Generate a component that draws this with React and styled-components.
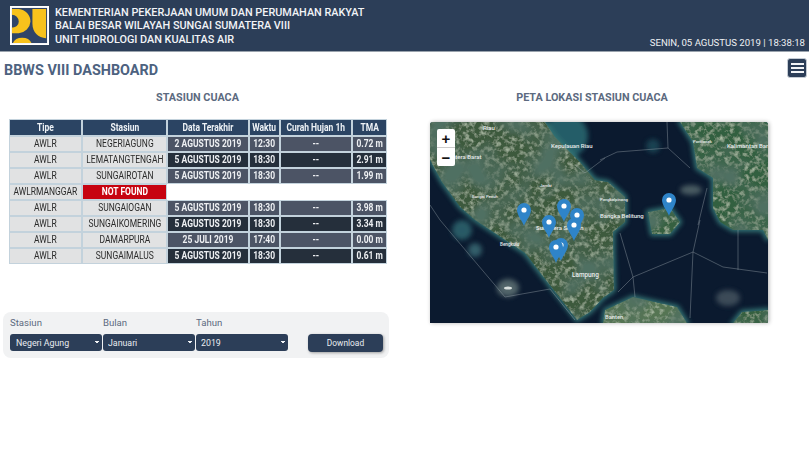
import React from 'react';
import styled, { createGlobalStyle } from 'styled-components';

const GlobalStyle = createGlobalStyle`
  html, body { margin: 0; padding: 0; background: #fff; }
  body { font-family: Roboto, "Liberation Sans", sans-serif; }
`;

const stations = [
  ['AWLR', 'NEGERIAGUNG', '2 AGUSTUS 2019', '12:30', '--', '0.72 m'],
  ['AWLR', 'LEMATANGTENGAH', '5 AGUSTUS 2019', '18:30', '--', '2.91 m'],
  ['AWLR', 'SUNGAIROTAN', '5 AGUSTUS 2019', '18:30', '--', '1.99 m'],
  ['AWLRMANGGAR', 'NOT FOUND'],
  ['AWLR', 'SUNGAIOGAN', '5 AGUSTUS 2019', '18:30', '--', '3.98 m'],
  ['AWLR', 'SUNGAIKOMERING', '5 AGUSTUS 2019', '18:30', '--', '3.34 m'],
  ['AWLR', 'DAMARPURA', '25 JULI 2019', '17:40', '--', '0.00 m'],
  ['AWLR', 'SUNGAIMALUS', '5 AGUSTUS 2019', '18:30', '--', '0.61 m'],
];

const pins = [
  [524, 226], [669, 216], [564, 222], [577, 231], [549, 238], [574, 241], [561, 261], [556, 263],
];

const Page = styled.div`
  width: 809px;
  height: 461px;
  overflow: hidden;
  background: #fff;
`;

const Header = styled.header`
  height: 52px;
  background: #2c3e58;
  border-bottom: 1px solid #9aa3ad;
  display: flex;
  padding: 6px 4px 0 10px;
  box-sizing: border-box;
  color: #fff;
`;

const Logo = styled.svg`
  width: 39px;
  height: 39px;
  flex: none;
`;

const HeaderText = styled.div`
  margin: 0 0 0 6px;
  font-size: 10.85px;
  font-weight: 500;
  line-height: 13.4px;
  color: #f2f4f7;
  flex: 1;
`;

const Clock = styled.div`
  align-self: flex-end;
  font-size: 9.6px;
  line-height: 12px;
  margin-bottom: 2px;
  color: #eef0f3;
`;

const TitleRow = styled.div`
  height: 38px;
  display: flex;
  align-items: center;
  justify-content: space-between;
  padding: 0 2px 0 4px;
`;

const Title = styled.h1`
  margin: -2px 0 0;
  font-size: 14.4px;
  font-weight: 700;
  color: #4d627f;
`;

const MenuButton = styled.button`
  width: 20px;
  height: 20px;
  margin-top: -6px;
  padding: 0;
  border: 1px solid #c5ccd4;
  border-radius: 3px;
  background: #2c3e58;
  display: flex;
  flex-direction: column;
  align-items: center;
  justify-content: center;
  gap: 2px;
`;

const MenuBar = styled.span`
  width: 13px;
  height: 2px;
  background: #f2f4f7;
`;

const Columns = styled.div`
  display: flex;
`;

const LeftColumn = styled.section`
  width: 395px;
  flex: none;
`;

const RightColumn = styled.section`
  width: 394px;
  flex: none;
`;

const SectionTitle = styled.h2`
  margin: 0;
  height: 29px;
  padding-top: 1px;
  box-sizing: border-box;
  line-height: 13px;
  font-size: 10.8px;
  font-weight: 700;
  text-align: center;
  color: #5c6a80;
`;

const Table = styled.table`
  margin: 0 0 0 9px;
  border-collapse: separate;
  border-spacing: 0;
  table-layout: fixed;
  width: 378px;
  font-size: 10.6px;
  line-height: 12px;
`;

const Squeeze = styled.span`
  display: block;
  width: 125%;
  margin-left: -12.5%;
  transform: scaleX(0.8);
  white-space: nowrap;
  text-align: center;
`;

const HeadCell = styled.th`
  height: 15px;
  padding: 0;
  border: 1px solid #c3d2dc;
  background: #2b4463;
  color: #eef2f6;
  font-weight: 700;
`;

const InfoCell = styled.td`
  height: 14px;
  padding: 0;
  border: 1px solid #c3d2dc;
  background: #e1e2e3;
  color: #2a2a2a;
`;

const MissingCell = styled(InfoCell)`
  background: #c70310;
  color: #fff;
  font-weight: 700;
`;

const ValueCell = styled.td`
  height: 14px;
  padding: 0;
  border: 1px solid #c3d2dc;
  background: ${(p) => (p.$dark ? '#252f3b' : '#4c5465')};
  color: #eef0f3;
  font-weight: 700;
`;

const BlankCell = styled.td`
  height: 14px;
  padding: 0;
  border: 1px solid transparent;
`;

const FilterPanel = styled.form`
  margin: 48px 0 0 3px;
  width: 386px;
  height: 46px;
  box-sizing: border-box;
  padding: 5px 6px 0 7px;
  background: #f1f2f3;
  border-radius: 8px;
  display: flex;
  align-items: flex-start;
`;

const Field = styled.label`
  width: 93px;
  display: flex;
  flex-direction: column;
  font-size: 9.6px;
  line-height: 12px;
  color: #5c6a80;
`;

const Select = styled.select`
  appearance: none;
  width: 92px;
  height: 17px;
  margin-top: 5px;
  padding: 0 0 0 ${(p) => p.$inset}px;
  border: 0;
  border-radius: 3px;
  background-color: #2c3e58;
  background-image: linear-gradient(45deg, transparent 50%, #f2f4f7 50%),
    linear-gradient(135deg, #f2f4f7 50%, transparent 50%);
  background-size: 2px 3px, 2px 3px;
  background-position: right 5px center, right 3px center;
  background-repeat: no-repeat;
  color: #e9ecf0;
  font-family: Roboto, sans-serif;
  font-size: 8.8px;
  outline: none;
`;

const DownloadButton = styled.button`
  width: 75px;
  height: 18px;
  margin: 17px 0 0 19px;
  padding: 0;
  border: 0;
  border-radius: 4px;
  background: #2c3e58;
  color: #e9ecf0;
  font-family: Roboto, sans-serif;
  font-size: 8.4px;
  box-shadow: 1px 1px 3px rgba(0, 0, 0, 0.35);
`;

const MapFrame = styled.div`
  position: relative;
  width: 338px;
  height: 201px;
  margin: 3px 0 0 35px;
  border-radius: 3px 3px 0 0;
  overflow: hidden;
  box-shadow: 1px 0 4px rgba(0, 0, 0, 0.3);
`;

const MapArt = styled.svg`
  display: block;
  width: 338px;
  height: 201px;
`;

const ZoomControl = styled.div`
  position: absolute;
  left: 7px;
  top: 7px;
  width: 18px;
  background: #fff;
  border-radius: 2px;
  display: flex;
  flex-direction: column;
`;

const ZoomButton = styled.span`
  height: 18px;
  display: flex;
  align-items: center;
  justify-content: center;
  font-family: "Liberation Sans", sans-serif;
  font-size: 15px;
  font-weight: 700;
  color: #111;
  & + & { border-top: 1px solid #ccc; }
`;

const sumatra = 'M0 0 L115 0 L125 15 L135 25 L150 40 L165 58 L178 60 L195 75 L195 100 L183 110 L184 168 L173 176 L160 190 L147 198 L108 148 L95 131 L45 98 L30 85 L12 60 L0 38 Z';
const kalimantan = 'M250 0 L263 20 L267 46 L283 56 L283 86 L290 100 L303 108 L333 108 L338 118 L338 0 Z';
const belitung = 'M218 90 L240 86 L250 100 L240 112 L222 112 Z';
const java = 'M173 201 L175 188 L203 175 L247 185 L257 201 Z';
const cornerIsle = 'M303 201 L312 190 L338 188 L338 201 Z';

const landPaths = [
  [sumatra, '#3e5a3e'],
  [kalimantan, '#336040'],
  [belitung, '#36603f'],
  [java, '#557552'],
  [cornerIsle, '#36603f'],
];

// shallow water round the islands: cx, cy, rx, ry, colour
const shallows = [
  [136, 14, 22, 22, '#2c6a72'],
  [32, 108, 10, 10, '#2e6670'],
  [45, 128, 7, 7, '#3a6a74'],
  [223, 24, 7, 7, '#1f4a58'],
  [78, 166, 11, 9, '#5e7275'],
  [298, 176, 12, 8, '#45525e'],
  [261, 68, 11, 5, '#55686c'],
];

const borderLines = [
  'M0 83 L10 98 L75 175 L120 167 L145 198',
  'M190 111 L203 155 L205 175',
  'M203 155 L263 130 L270 98',
  'M263 130 L260 196',
  'M263 130 L293 145 L337 151',
  'M308 108 L308 148',
  'M203 155 L188 170',
  'M237 0 L238 26 L260 46',
  'M238 26 L187 30 L170 38',
  'M277 66 L268 103',
  'M145 43 L155 51 L175 36',
];

const mapLabels = [
  [53, 8, 6, 'Riau'],
  [121, 26, 6, 'Kepulauan Riau'],
  [22, 37, 6, 'atera Barat'],
  [297, 26, 6, 'Kalimantan Bar'],
  [170, 96, 6, 'Bangka Belitung'],
  [106, 108, 6, 'Sumatera Selatan'],
  [142, 155, 6.4, 'Lampung'],
  [175, 197, 5.8, 'Banten'],
  [70, 124, 4.6, 'Bengkulu'],
  [42, 76, 4.2, 'Sungai Penuh'],
  [110, 65, 4.2, 'Jambi'],
  [263, 21, 4.2, 'Pontianak'],
  [170, 79, 4.2, 'Pangkalpinang'],
];

function StationMap() {
  return (
    <MapFrame>
      <MapArt viewBox="0 0 338 201">
        <defs>
          <filter id="land-grain" x="0" y="0" width="100%" height="100%">
            <feTurbulence type="fractalNoise" baseFrequency="0.2" numOctaves="3" seed="7" result="grain" />
            <feColorMatrix in="grain" values="0 0 0 0 0.46  0 0 0 0 0.56  0 0 0 0 0.42  2 0 0 0 -0.92" result="light" />
            <feTurbulence type="fractalNoise" baseFrequency="0.03" numOctaves="2" seed="11" result="patch" />
            <feColorMatrix in="patch" values="0 0 0 0 0.08  0 0 0 0 0.16  0 0 0 0 0.12  3 0 0 0 -1.2" result="shade" />
            <feMerge result="texture">
              <feMergeNode in="SourceGraphic" />
              <feMergeNode in="light" />
              <feMergeNode in="shade" />
            </feMerge>
            <feGaussianBlur in="texture" stdDeviation="0.45" result="soft" />
            <feComposite in="soft" in2="SourceAlpha" operator="in" />
          </filter>
          <filter id="coast-blur">
            <feGaussianBlur stdDeviation="2.4" />
          </filter>
          <filter id="edge-blur">
            <feGaussianBlur stdDeviation="0.7" />
          </filter>
        </defs>
        <rect width="338" height="201" fill="#0b1a2f" />
        <g filter="url(#coast-blur)" opacity="0.85">
          {shallows.map(([cx, cy, rx, ry, fill]) => (
            <ellipse key={cx} cx={cx} cy={cy} rx={rx} ry={ry} fill={fill} />
          ))}
          {landPaths.map(([d]) => (
            <path key={d} d={d} fill="#3a8480" stroke="#3a8480" strokeWidth="4" />
          ))}
        </g>
        <ellipse cx="78" cy="166" rx="4" ry="1.6" fill="#d7dfdd" filter="url(#edge-blur)" />
        <g filter="url(#land-grain)">
          <g filter="url(#edge-blur)">
            {landPaths.map(([d, fill]) => (
              <path key={d} d={d} fill={fill} />
            ))}
          </g>
        </g>
        <g fill="none" stroke="#aab4ba" strokeWidth="0.5" opacity="0.75">
          {borderLines.map((d) => (
            <path key={d} d={d} />
          ))}
        </g>
        {mapLabels.map(([x, y, size, label]) => (
          <text key={label} x={x} y={y} fontFamily="Roboto, sans-serif" fontSize={size} fontWeight="500" fill="#e8ecec">
            {label}
          </text>
        ))}
        {pins.map(([x, y]) => (
          <g key={`${x}-${y}`} transform={`translate(${x - 430 - 7} ${y - 122 - 23})`}>
            <path d="M7 23 C5.5 18 0 12.5 0 7 A7 7 0 0 1 14 7 C14 12.5 8.5 18 7 23 Z" fill="#2f84c8" />
            <circle cx="7" cy="7" r="2.6" fill="#fff" />
          </g>
        ))}
      </MapArt>
      <ZoomControl>
        <ZoomButton>+</ZoomButton>
        <ZoomButton>−</ZoomButton>
      </ZoomControl>
    </MapFrame>
  );
}

function App() {
  return (
    <Page>
      <GlobalStyle />
      <Header>
        <Logo viewBox="0 0 40 40">
          <rect width="40" height="40" fill="#fff" />
          <rect x="2" y="2" width="36" height="36" fill="#2f4468" />
          <path d="M2 3 H9 A13 13 0 0 1 21 16 A13 13 0 0 1 9 28 H2 V22 A6 6 0 0 0 9 16 A7 7 0 0 0 2 9 Z" fill="#f8c21c" />
          <path d="M23 3 H37 V33 C29 33 23 27 23 18 Z" fill="#f8c21c" />
          <path d="M3 38 A10 8 0 0 1 22 38 Z" fill="#f8c21c" />
        </Logo>
        <HeaderText>
          KEMENTERIAN PEKERJAAN UMUM DAN PERUMAHAN RAKYAT<br />
          BALAI BESAR WILAYAH SUNGAI SUMATERA VIII<br />
          UNIT HIDROLOGI DAN KUALITAS AIR
        </HeaderText>
        <Clock>SENIN, 05 AGUSTUS 2019 | 18:38:18</Clock>
      </Header>
      <TitleRow>
        <Title>BBWS VIII DASHBOARD</Title>
        <MenuButton type="button" aria-label="Menu">
          <MenuBar />
          <MenuBar />
          <MenuBar />
        </MenuButton>
      </TitleRow>
      <Columns>
        <LeftColumn>
          <SectionTitle>STASIUN CUACA</SectionTitle>
          <Table>
            <colgroup>
              <col width="73" />
              <col width="85" />
              <col width="82" />
              <col width="31" />
              <col width="72" />
              <col width="35" />
            </colgroup>
            <thead>
              <tr>
                {['Tipe', 'Stasiun', 'Data Terakhir', 'Waktu', 'Curah Hujan 1h', 'TMA'].map((h) => (
                  <HeadCell key={h}><Squeeze>{h}</Squeeze></HeadCell>
                ))}
              </tr>
            </thead>
            <tbody>
              {stations.map((row, i) => {
                const missing = row.length === 2;
                return (
                  <tr key={row[1]}>
                    <InfoCell><Squeeze>{row[0]}</Squeeze></InfoCell>
                    {missing
                      ? <MissingCell><Squeeze>{row[1]}</Squeeze></MissingCell>
                      : <InfoCell><Squeeze>{row[1]}</Squeeze></InfoCell>}
                    {missing
                      ? [0, 1, 2, 3].map((n) => <BlankCell key={n} />)
                      : row.slice(2).map((value, n) => (
                          <ValueCell key={n} $dark={i % 2 === 1}><Squeeze>{value}</Squeeze></ValueCell>
                        ))}
                  </tr>
                );
              })}
            </tbody>
          </Table>
          <FilterPanel>
            <Field>
              Stasiun
              <Select $inset={6} defaultValue="Negeri Agung"><option>Negeri Agung</option></Select>
            </Field>
            <Field>
              Bulan
              <Select $inset={5} defaultValue="Januari"><option>Januari</option></Select>
            </Field>
            <Field>
              Tahun
              <Select $inset={5} defaultValue="2019"><option>2019</option></Select>
            </Field>
            <DownloadButton type="button">Download</DownloadButton>
          </FilterPanel>
        </LeftColumn>
        <RightColumn>
          <SectionTitle>PETA LOKASI STASIUN CUACA</SectionTitle>
          <StationMap />
        </RightColumn>
      </Columns>
    </Page>
  );
}

export default App;
